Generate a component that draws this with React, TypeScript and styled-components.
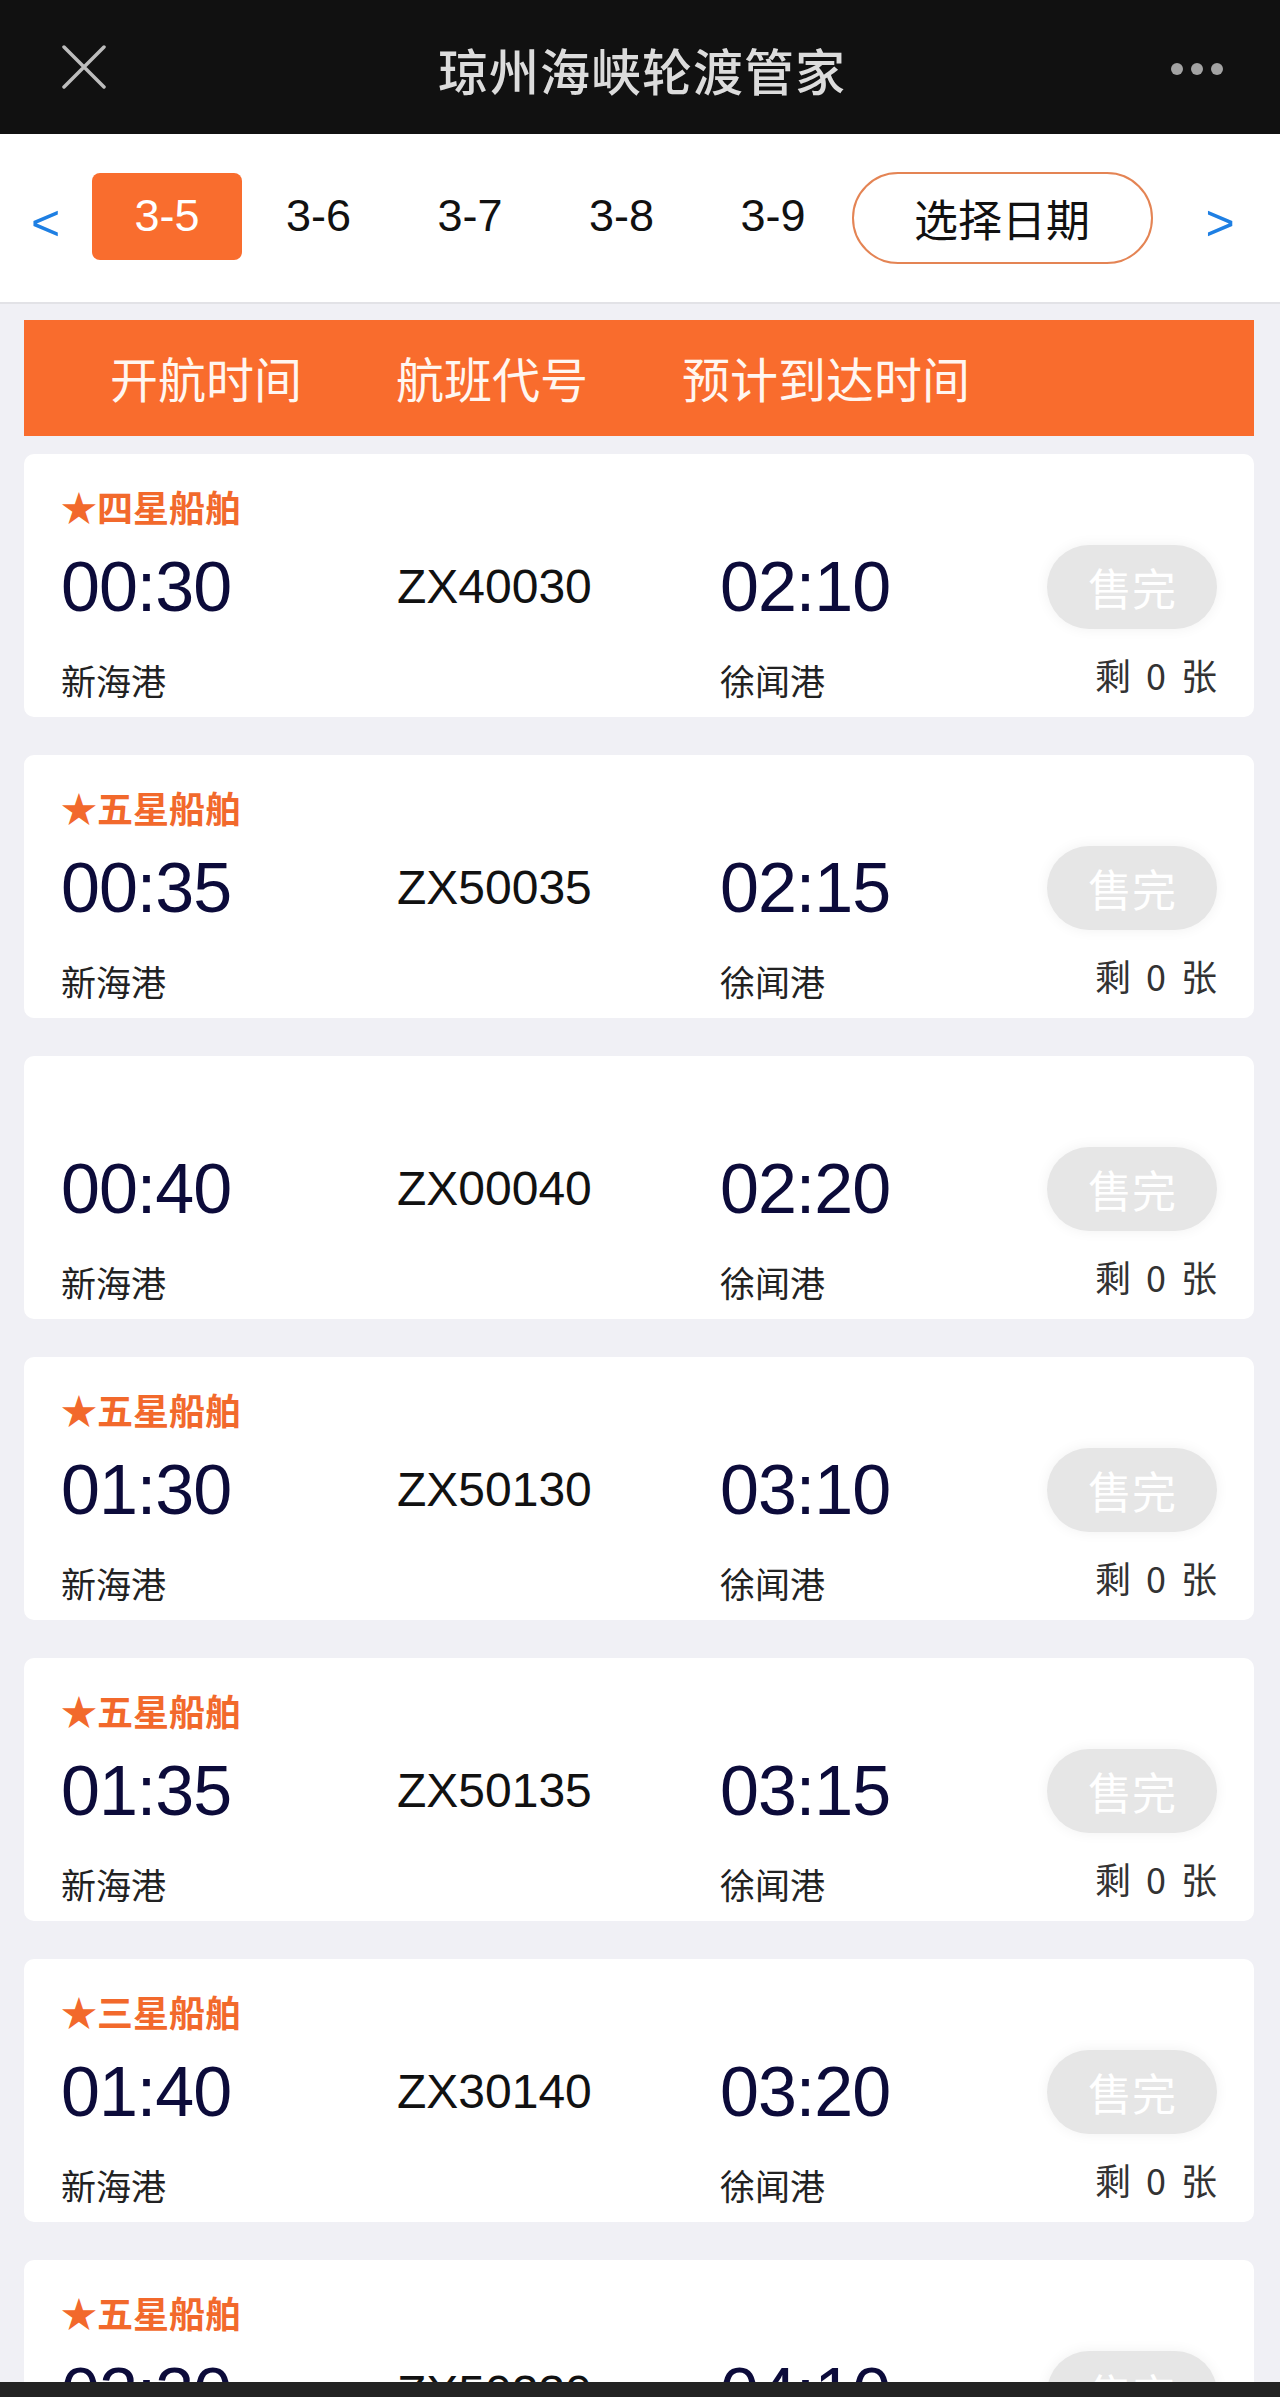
import React from "react";
import styled, { createGlobalStyle } from "styled-components";

const CJK = `"Noto Sans CJK SC", "Noto Sans", sans-serif`;
const LATIN = `"Liberation Sans", "Noto Sans CJK SC", Arial, sans-serif`;

const GlobalStyle = createGlobalStyle`
  html, body { margin: 0; padding: 0; }
  body { background: #f0f0f5; font-family: ${CJK}; }
  * { box-sizing: border-box; }
`;

const Page = styled.div`
  width: 1280px;
  height: 2397px;
  display: flex;
  flex-direction: column;
  overflow: hidden;
  background: #f0f0f5;
`;

const TopBar = styled.header`
  height: 134px;
  flex: none;
  background: #111111;
  display: grid;
  grid-template-columns: 1fr auto 1fr;
  align-items: center;
  padding: 0 57px 0 61px;
`;

const CloseBtn = styled.div`
  width: 46px;
  height: 44px;
  display: flex;
`;

const Title = styled.h1`
  margin: 0;
  font-family: ${CJK};
  font-size: 50px;
  font-weight: 500;
  color: #dcdcdc;
  letter-spacing: 1px;
  line-height: 60px;
  padding-top: 4px;
`;

const Dots = styled.div`
  justify-self: end;
  display: flex;
  gap: 8px;
  padding-top: 4px;
`;

const Dot = styled.span`
  width: 12px;
  height: 12px;
  border-radius: 50%;
  background: #a3a3a3;
`;

const DateBar = styled.nav`
  height: 170px;
  flex: none;
  background: #ffffff;
  border-bottom: 2px solid #e2e2e6;
  display: flex;
  align-items: center;
  padding: 0 0 0 31px;
`;

const Arrow = styled.span<{ $right?: boolean }>`
  font-family: ${LATIN};
  font-size: 50px;
  line-height: 50px;
  color: #1e7fe3;
  width: 27px;
  margin: ${(p) => (p.$right ? "10px 0 0 53px" : "10px 34px 0 0")};
`;

const DateItem = styled.div<{ $active?: boolean }>`
  width: 150px;
  height: 87px;
  margin-right: 1.5px;
  margin-top: -4px;
  border-radius: 8px;
  display: flex;
  align-items: center;
  justify-content: center;
  font-family: ${LATIN};
  font-size: 45px;
  color: ${(p) => (p.$active ? "#fff" : "#111")};
  background: ${(p) => (p.$active ? "#f96d2e" : "transparent")};
`;

const PickDate = styled.div`
  width: 301px;
  height: 92px;
  margin-left: 2px;
  border: 2px solid #e48454;
  border-radius: 46px;
  display: flex;
  align-items: center;
  justify-content: center;
  font-family: ${CJK};
  font-size: 44px;
  color: #111;
`;

const Content = styled.main`
  flex: 1;
  overflow: hidden;
  padding: 16px 26px 0 24px;
  display: flex;
  flex-direction: column;
`;

const ColumnHead = styled.div`
  height: 116px;
  flex: none;
  background: #f96c2d;
  display: flex;
  align-items: center;
  gap: 94px;
  padding: 0 0 2px 86px;
  font-family: ${CJK};
  font-size: 48px;
  color: #fff6f0;
`;

const List = styled.div`
  margin-top: 18px;
  display: flex;
  flex-direction: column;
  gap: 38px;
`;

const Card = styled.section`
  height: 263px;
  flex: none;
  background: #fff;
  border-radius: 10px;
  display: grid;
  grid-template-columns: 336px 323px 1fr 170px;
  grid-template-rows: 44px 118px 44px;
  row-gap: 0;
  padding: 30px 37px 0;
  align-items: center;
`;

const Grade = styled.div`
  grid-column: 1 / 4;
  grid-row: 1;
  font-family: ${CJK};
  font-size: 36px;
  font-weight: 700;
  line-height: 44px;
  color: #f2692c;
`;

const Clock = styled.div<{ $col: number }>`
  grid-row: 2;
  grid-column: ${(p) => p.$col};
  font-family: ${LATIN};
  font-size: 70px;
  line-height: 80px;
  color: #0c0b3a;
  letter-spacing: -1px;
`;

const Code = styled.div`
  grid-row: 2;
  grid-column: 2;
  font-family: ${LATIN};
  font-size: 48px;
  line-height: 60px;
  color: #111;
`;

const SoldOut = styled.div`
  grid-row: 2;
  grid-column: 4;
  height: 84px;
  border-radius: 42px;
  background: #e6e6e6;
  box-shadow: 0 0 14px rgba(0, 0, 0, 0.06);
  display: flex;
  align-items: center;
  justify-content: center;
  font-family: ${CJK};
  font-size: 44px;
  color: #ffffff;
`;

const Port = styled.div<{ $col: number }>`
  grid-row: 3;
  grid-column: ${(p) => p.$col};
  margin-top: 24px;
  font-family: ${CJK};
  font-size: 35px;
  line-height: 44px;
  color: #222;
`;

const Remain = styled.div`
  grid-row: 3;
  grid-column: 4;
  margin-top: 12px;
  justify-self: end;
  font-family: ${CJK};
  font-size: 36px;
  line-height: 44px;
  color: #333;
  white-space: pre;
  word-spacing: 7px;
`;

const HomeBar = styled.div`
  height: 15px;
  flex: none;
  background: #232323;
`;

type Sailing = {
  grade?: string;
  dep: string;
  code: string;
  arr: string;
};

const sailings: Sailing[] = [
  { grade: "四星船舶", dep: "00:30", code: "ZX40030", arr: "02:10" },
  { grade: "五星船舶", dep: "00:35", code: "ZX50035", arr: "02:15" },
  { dep: "00:40", code: "ZX00040", arr: "02:20" },
  { grade: "五星船舶", dep: "01:30", code: "ZX50130", arr: "03:10" },
  { grade: "五星船舶", dep: "01:35", code: "ZX50135", arr: "03:15" },
  { grade: "三星船舶", dep: "01:40", code: "ZX30140", arr: "03:20" },
  { grade: "五星船舶", dep: "02:30", code: "ZX50230", arr: "04:10" },
];

const dates = ["3-5", "3-6", "3-7", "3-8", "3-9"];

export default function App() {
  return (
    <Page>
      <GlobalStyle />
      <TopBar>
        <CloseBtn>
          <svg width="46" height="44" viewBox="0 0 46 44">
            <path d="M3 2 L43 42 M43 2 L3 42" stroke="#bdbdbd" strokeWidth="3.5" strokeLinecap="round" />
          </svg>
        </CloseBtn>
        <Title>琼州海峡轮渡管家</Title>
        <Dots>
          <Dot />
          <Dot />
          <Dot />
        </Dots>
      </TopBar>
      <DateBar>
        <Arrow>&lt;</Arrow>
        {dates.map((d, i) => (
          <DateItem key={d} $active={i === 0}>
            {d}
          </DateItem>
        ))}
        <PickDate>选择日期</PickDate>
        <Arrow $right>&gt;</Arrow>
      </DateBar>
      <Content>
        <ColumnHead>
          <span>开航时间</span>
          <span>航班代号</span>
          <span>预计到达时间</span>
        </ColumnHead>
        <List>
          {sailings.map((s) => (
            <Card key={s.code}>
              {s.grade && <Grade>★{s.grade}</Grade>}
              <Clock $col={1}>{s.dep}</Clock>
              <Code>{s.code}</Code>
              <Clock $col={3}>{s.arr}</Clock>
              <SoldOut>售完</SoldOut>
              <Port $col={1}>新海港</Port>
              <Port $col={3}>徐闻港</Port>
              <Remain>剩 0 张</Remain>
            </Card>
          ))}
        </List>
      </Content>
      <HomeBar />
    </Page>
  );
}
